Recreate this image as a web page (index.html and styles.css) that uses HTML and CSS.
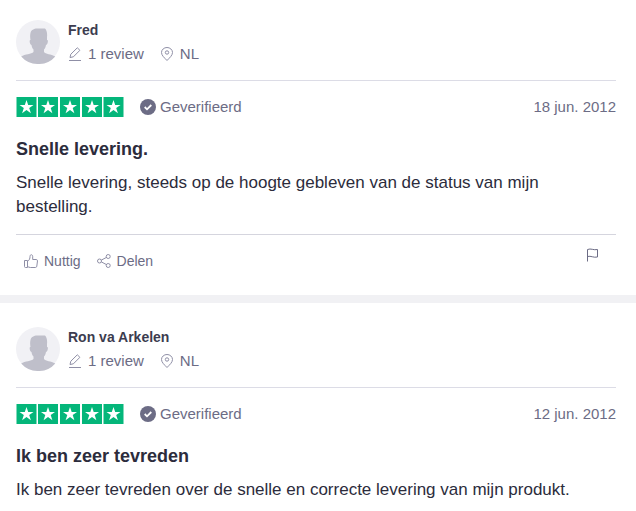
FILE: index.html
```html
<!DOCTYPE html>
<html lang="nl">
<head>
    <meta charset="UTF-8">
    <meta name="viewport" content="width=device-width, initial-scale=1.0">
    <title>Reviews</title>
    <link rel="stylesheet" href="styles.css">
</head>
<body>

    <!-- Iconen die in elke review terugkomen -->
    <svg class="icon-sprite" aria-hidden="true">
        <symbol id="avatar" viewBox="0 0 44 44">
            <circle cx="22" cy="22" r="22" fill="#f1f1f5"/>
            <path fill="#bfbfca" d="M14.500 13C15 10 18 8.500 21 8.500h8C30.500 10 31.500 13 31 17v3c1 0 1 1 .7 2.500-.3 1.500-1 2.500-1.700 2.500-.4 2-1 3.500-2 4.500V32c1.500 2 7 2.200 11.300 4.500A22 22 0 0 1 22 44 22 22 0 0 1 5.200 36.500C9 34.200 15.500 34 17.500 32v-2.500c-1-1-1.700-2.500-2-4.500-.7 0-1.400-1-1.700-2.500-.3-1.500-.1-2.500.7-2.500-.5-2.500-.5-5 0-7z"/>
        </symbol>
        <symbol id="pen" viewBox="0 0 14 14">
            <path d="M1 13.500h12M2 10.500l.8-3.300L9.300.8l2.600 2.500-6.500 6.500L2 10.500z"/>
        </symbol>
        <symbol id="pin" viewBox="0 0 14 14">
            <path d="M7 13.500C4.500 10.800 1.500 8.500 1.500 5.500a5.500 5 0 0 1 11 0c0 3-3 5.300-5.500 8z"/>
            <circle cx="7" cy="5.500" r="1.700"/>
        </symbol>
        <symbol id="stars" viewBox="0 0 108 20">
            <path fill="#04b67a" d="M.5 0h20v20H.5zM22 0h20v20H22zM44 0h20v20H44zM66 0h20v20H66zM87.500 0h20v20h-20z"/>
            <g fill="#fff">
                <path id="star" d="M10.500 3l1.700 5h5.300l-4.300 3.100 1.700 5.200-4.400-3.200-4.400 3.200 1.700-5.200L3.500 8h5.300z"/>
                <use href="#star" x="21.500"/>
                <use href="#star" x="43.500"/>
                <use href="#star" x="65.500"/>
                <use href="#star" x="87"/>
            </g>
        </symbol>
        <symbol id="check" viewBox="0 0 16 16">
            <circle cx="8" cy="8" r="8" fill="#6c6c85"/>
            <path d="M4.700 8l2.300 2.300 4.300-4.300" fill="none" stroke="#fff" stroke-width="1.800"/>
        </symbol>
        <symbol id="thumb" viewBox="0 0 14 14">
            <path d="M.5 6.500h3v7h-2a1 1 0 0 1-1-1zM3.500 7.500C5.500 6 6 4.500 6 2.500 6 .2 8.700 0 8.700 2.700V5.500h3.500c.8 0 1.300.6 1.300 1.300l-.7 5.400c-.1.800-.6 1.300-1.400 1.300H6.500c-1.200 0-2-.5-3-1"/>
        </symbol>
        <symbol id="share" viewBox="0 0 14 14">
            <circle cx="2.500" cy="7" r="2"/>
            <circle cx="11.200" cy="2.500" r="2"/>
            <circle cx="11.200" cy="11.500" r="2"/>
            <path d="M4.300 6.100l5-2.600M4.300 7.900l5 2.600"/>
        </symbol>
        <symbol id="flag" viewBox="0 0 14 14">
            <path d="M1.500 13.500V1.500c3.500-1.500 6 1 10 0V9c-4 1-6.500-1.500-10-.5"/>
        </symbol>
    </svg>

    <main class="reviews">
        <article class="review">
            <header class="consumer">
                <svg class="avatar" aria-hidden="true"><use href="#avatar"/></svg>
                <div class="consumer-info">
                    <div class="consumer-name">Fred</div>
                    <div class="consumer-details">
                        <span class="detail"><svg class="icon" aria-hidden="true"><use href="#pen"/></svg>1 review</span>
                        <span class="detail"><svg class="icon" aria-hidden="true"><use href="#pin"/></svg>NL</span>
                    </div>
                </div>
            </header>
            <section class="content">
                <div class="rating">
                    <svg class="stars" role="img" aria-label="5 sterren"><use href="#stars"/></svg>
                    <span class="verified"><svg class="check" aria-hidden="true"><use href="#check"/></svg>Geverifieerd</span>
                    <time class="date" datetime="2012-06-18">18 jun. 2012</time>
                </div>
                <h2 class="title">Snelle levering.</h2>
                <p class="text">Snelle levering, steeds op de hoogte gebleven van de status van mijn bestelling.</p>
            </section>
            <footer class="actions">
                <button type="button" class="action"><svg class="icon" aria-hidden="true"><use href="#thumb"/></svg>Nuttig</button>
                <button type="button" class="action"><svg class="icon" aria-hidden="true"><use href="#share"/></svg>Delen</button>
                <button type="button" class="report" aria-label="Melden"><svg class="icon" aria-hidden="true"><use href="#flag"/></svg></button>
            </footer>
        </article>

        <article class="review">
            <header class="consumer">
                <svg class="avatar" aria-hidden="true"><use href="#avatar"/></svg>
                <div class="consumer-info">
                    <div class="consumer-name">Ron va Arkelen</div>
                    <div class="consumer-details">
                        <span class="detail"><svg class="icon" aria-hidden="true"><use href="#pen"/></svg>1 review</span>
                        <span class="detail"><svg class="icon" aria-hidden="true"><use href="#pin"/></svg>NL</span>
                    </div>
                </div>
            </header>
            <section class="content">
                <div class="rating">
                    <svg class="stars" role="img" aria-label="5 sterren"><use href="#stars"/></svg>
                    <span class="verified"><svg class="check" aria-hidden="true"><use href="#check"/></svg>Geverifieerd</span>
                    <time class="date" datetime="2012-06-12">12 jun. 2012</time>
                </div>
                <h2 class="title">Ik ben zeer tevreden</h2>
                <p class="text">Ik ben zeer tevreden over de snelle en correcte levering van mijn produkt.</p>
            </section>
        </article>
    </main>

</body>
</html>
```

FILE: styles.css
```css
body {
    margin: 0;
    background: #fff;
    color: #2c2c3c;
    font-family: "Liberation Sans", Arial, sans-serif;
    font-size: 17px;
    line-height: 24px;
}

.icon-sprite {
    display: none;
}

.reviews {
    display: flex;
    flex-direction: column;
    gap: 8px;
    background: #f1f1f4;
}

.review {
    padding: 24px 20px 0 16px;
    background: #fff;
}

.review:first-child {
    padding-top: 20px;
}

.consumer {
    display: flex;
    gap: 8px;
    padding-bottom: 16px;
    border-bottom: 1px solid #dcdce6;
}

.avatar {
    width: 44px;
    height: 44px;
}

.consumer-info {
    line-height: 20px;
}

.consumer-name {
    margin-bottom: 4px;
    color: #3c3c4f;
    font-size: 14px;
    font-weight: bold;
}

.consumer-details {
    display: flex;
    gap: 16px;
    color: #6c6c85;
    font-size: 15px;
}

.detail {
    display: flex;
    align-items: center;
    gap: 6px;
}

.icon {
    width: 14px;
    height: 14px;
    fill: none;
    stroke: #8f8fa6;
    stroke-width: 1;
}

.content {
    padding: 16px 0 15px;
}

.rating {
    display: flex;
    align-items: center;
    gap: 16px;
    line-height: 20px;
    color: #6c6c85;
    font-size: 15px;
}

.stars {
    width: 108px;
    height: 20px;
}

.verified {
    display: flex;
    align-items: center;
    gap: 4px;
}

.check {
    width: 16px;
    height: 16px;
}

.date {
    margin-left: auto;
}

.title {
    margin: 20px 0 10px;
    font-size: 18px;
    font-weight: bold;
}

.text {
    margin: 0;
}

.actions {
    display: flex;
    align-items: flex-start;
    padding: 8px 8px 16px 0;
    border-top: 1px solid #d5d5de;
}

.action,
.report {
    display: flex;
    align-items: center;
    gap: 6px;
    padding: 8px;
    border: 0;
    background: none;
    color: #6c6c85;
    font-family: inherit;
    font-size: 14px;
    line-height: 20px;
    cursor: pointer;
}

.report {
    margin-left: auto;
    padding: 5px 8px;
}

.report .icon {
    stroke: #6c6c85;
}
```
